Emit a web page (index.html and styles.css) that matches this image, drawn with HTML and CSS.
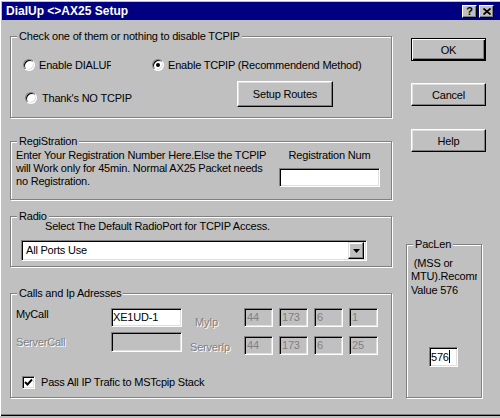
FILE: index.html
```html
<!DOCTYPE html>
<html>
<head>
<meta charset="utf-8">
<title>DialUp AX25 Setup</title>
<link rel="stylesheet" href="styles.css">
</head>
<body>
<div class="window">
  <div class="titlebar">
    <span class="title">DialUp &lt;&gt;AX25 Setup</span>
    <div class="caps">
      <span class="cap cap-help">?</span>
      <span class="cap cap-close"><svg width="8" height="7" viewBox="0 0 8 7"><path d="M0.5 0.5 L7.5 6.5 M7.5 0.5 L0.5 6.5" stroke="#000" stroke-width="1.7" fill="none"/></svg></span>
    </div>
  </div>
  <div class="client">
    <div class="leftcol">
      <div class="group g1">
        <div class="legend">Check one of them or nothing to disable TCPIP</div>
        <div class="g1-row1">
          <div class="opt opt-dialup"><span class="radio"></span><span class="opt-text clip-dialup">Enable DIALUP</span></div>
          <div class="opt"><span class="radio on"></span><span class="opt-text">Enable TCPIP (Recommendend Method)</span></div>
        </div>
        <div class="g1-row2">
          <div class="opt opt-no"><span class="radio"></span><span class="opt-text">Thank's NO TCPIP</span></div>
          <div class="btn btn-routes">Setup Routes</div>
        </div>
      </div>

      <div class="group g2">
        <div class="legend">RegiStration</div>
        <div class="g2-body">
          <div class="reg-text">Enter Your Registration Number Here.Else the TCPIP<br>will Work only for 45min. Normal AX25 Packet needs<br>no Registration.</div>
          <div class="reg-side">
            <div class="reg-label">Registration Num</div>
            <div class="edit reg-input"></div>
          </div>
        </div>
      </div>

      <div class="group g3">
        <div class="legend">Radio</div>
        <div class="radio-text">Select The Default RadioPort for TCPIP Access.</div>
        <div class="edit combo">
          <span class="combo-text">All Ports Use</span>
          <span class="combo-btn"><svg width="7" height="4" viewBox="0 0 7 4"><path d="M0 0 H7 L3.5 4 Z" fill="#000"/></svg></span>
        </div>
      </div>

      <div class="group g4">
        <div class="legend">Calls and Ip Adresses</div>
        <div class="calls">
          <div class="calls-left">
            <div class="lbl lbl-mycall">MyCall</div>
            <div class="edit call-input">XE1UD-1</div>
            <div class="lbl dis lbl-server">ServerCall</div>
            <div class="edit disabled call-input2"></div>
          </div>
          <div class="calls-right">
            <div class="lbl dis lbl-myip">MyIp</div>
            <div class="edit disabled ip">44</div>
            <div class="edit disabled ip">173</div>
            <div class="edit disabled ip">6</div>
            <div class="edit disabled ip">1</div>
            <div class="lbl dis lbl-serverip">ServerIp</div>
            <div class="edit disabled ip">44</div>
            <div class="edit disabled ip">173</div>
            <div class="edit disabled ip">6</div>
            <div class="edit disabled ip">25</div>
          </div>
        </div>
        <div class="check-row">
          <span class="checkbox"><svg width="9" height="9" viewBox="0 0 9 9"><path d="M1 4 L3.5 6.5 L8 1.5" stroke="#000" stroke-width="1.9" fill="none"/></svg></span>
          <span class="check-text">Pass All IP Trafic to MSTcpip Stack</span>
        </div>
      </div>
    </div>

    <div class="rightcol">
      <div class="btn default btn-ok">OK</div>
      <div class="btn btn-cancel">Cancel</div>
      <div class="btn btn-help">Help</div>
      <div class="group g5">
        <div class="legend">PacLen</div>
        <div class="pac-text"> (MSS or<br>MTU).Recommended<br>Value 576</div>
        <div class="edit pac-input">576<span class="caret"></span></div>
      </div>
    </div>
  </div>
</div>
</body>
</html>
```

FILE: styles.css
```css
html, body {
  margin: 0;
  padding: 0;
}
body {
  width: 500px;
  height: 418px;
  overflow: hidden;
  background: #c0c0c0;
  font-family: "Liberation Sans", Arial, sans-serif;
  font-size: 11px;
  letter-spacing: -0.2px;
  color: #000;
}
.window {
  box-sizing: border-box;
  width: 500px;
  height: 416px;
  padding: 2px 0 0 2px;
  background: #c0c0c0;
  box-shadow: inset 1px 1px 0 #fff, inset 0 -1px 0 #000, inset 0 -2px 0 #808080;
}
.titlebar {
  height: 18px;
  background: #000080;
  display: flex;
  align-items: center;
  padding-left: 4px;
}
.title {
  color: #fff;
  font-weight: bold;
  font-size: 12px;
  letter-spacing: 0;
  line-height: 18px;
}
.caps {
  margin-left: auto;
  margin-right: 6px;
  display: flex;
  gap: 2px;
}
.cap {
  box-sizing: border-box;
  width: 15px;
  height: 13px;
  background: #c0c0c0;
  border: 1px solid;
  border-color: #fff #000 #000 #fff;
  box-shadow: inset -1px -1px 0 #808080;
  display: flex;
  align-items: center;
  justify-content: center;
  font-weight: bold;
  font-size: 11px;
  line-height: 11px;
  letter-spacing: 0;
}

.client {
  display: flex;
  padding-left: 8px;
}
.leftcol {
  width: 382px;
  display: flex;
  flex-direction: column;
}
.rightcol {
  width: 80px;
  margin-left: 14px;
  display: flex;
  flex-direction: column;
}

.group {
  box-sizing: border-box;
  border: 1px solid #808080;
  box-shadow: 1px 1px 0 #fff, inset 1px 1px 0 #fff;
  display: flex;
  flex-direction: column;
}
.legend {
  align-self: flex-start;
  background: #c0c0c0;
  margin-top: -7px;
  margin-left: 6px;
  padding: 0 2px;
  line-height: 13px;
  white-space: nowrap;
}

.g1 { margin-top: 16px; padding-bottom: 10px; }
.g1-row1 {
  display: flex;
  margin-top: 16px;
  margin-left: 12px;
  height: 12px;
}
.opt {
  display: flex;
  align-items: center;
  gap: 4px;
  white-space: nowrap;
  line-height: 12px;
}
.opt-dialup { width: 129px; }
.clip-dialup { width: 72px; overflow: hidden; }
.g1-row2 {
  display: flex;
  margin-top: 10px;
  margin-left: 14px;
  height: 26px;
}
.opt-no {
  width: 212px;
  align-self: flex-start;
  margin-top: 11px;
  gap: 5px;
}
.radio {
  box-sizing: border-box;
  flex: none;
  width: 12px;
  height: 12px;
  border-radius: 50%;
  background: #fff;
  border: 1px solid;
  border-color: #808080 #fff #fff #808080;
  box-shadow: inset 1px 1px 0 #000, inset -1px -1px 0 #dfdfdf;
  display: flex;
  align-items: center;
  justify-content: center;
}
.radio.on::after {
  content: "";
  width: 4px;
  height: 4px;
  border-radius: 50%;
  background: #000;
}

.btn {
  box-sizing: border-box;
  background: #c0c0c0;
  border: 1px solid;
  border-color: #fff #000 #000 #fff;
  box-shadow: inset -1px -1px 0 #808080, inset 1px 1px 0 #dfdfdf;
  display: flex;
  align-items: center;
  justify-content: center;
  white-space: nowrap;
}
.btn.default {
  border-color: #000;
  box-shadow: inset 1px 1px 0 #fff, inset -1px -1px 0 #000, inset -2px -2px 0 #808080;
}
.btn-routes {
  width: 96px;
  height: 26px;
}
.btn-ok, .btn-cancel, .btn-help {
  width: 75px;
  height: 23px;
  margin-left: 5px;
}
.btn-ok { margin-top: 18px; }
.btn-cancel { margin-top: 22px; }
.btn-help { margin-top: 23px; }

.edit {
  box-sizing: border-box;
  background: #fff;
  border: 1px solid;
  border-color: #808080 #fff #fff #808080;
  box-shadow: inset 1px 1px 0 #000, inset -1px -1px 0 #dfdfdf;
  white-space: nowrap;
  overflow: hidden;
}
.edit.disabled {
  background: #c0c0c0;
  color: #808080;
}

.g2 { margin-top: 23px; padding-bottom: 11px; }
.g2-body {
  display: flex;
  margin-top: 1px;
}
.reg-text {
  margin-left: 5px;
  line-height: 13px;
  white-space: nowrap;
}
.reg-side {
  margin-left: auto;
  margin-right: 11px;
  width: 101px;
  display: flex;
  flex-direction: column;
}
.reg-label {
  text-align: center;
  line-height: 13px;
  white-space: nowrap;
}
.reg-input {
  margin-top: 6px;
  height: 19px;
}

.g3 { margin-top: 16px; padding-bottom: 5px; }
.radio-text {
  margin-top: -3px;
  margin-left: 34px;
  line-height: 13px;
}
.combo {
  margin-top: 7px;
  margin-left: 10px;
  width: 346px;
  height: 21px;
  display: flex;
  align-items: center;
  padding: 2px;
}
.combo-text {
  padding-left: 2px;
  line-height: 13px;
}
.combo-btn {
  box-sizing: border-box;
  margin-left: auto;
  width: 16px;
  height: 17px;
  background: #c0c0c0;
  border: 1px solid;
  border-color: #dfdfdf #000 #000 #dfdfdf;
  box-shadow: inset -1px -1px 0 #808080, inset 1px 1px 0 #fff;
  display: flex;
  align-items: center;
  justify-content: center;
}

.g4 { margin-top: 26px; padding-bottom: 8px; }
.calls {
  display: flex;
  margin-top: 8px;
}
.calls-left {
  margin-left: 5px;
  display: grid;
  grid-template-columns: 95px 71px;
  grid-template-rows: 19px 20px;
  row-gap: 5px;
  align-self: flex-start;
}
.calls-right {
  display: grid;
  grid-template-columns: 56px 29px 29px 29px 29px;
  grid-template-rows: 19px 19px;
  column-gap: 6px;
  row-gap: 9px;
}
.lbl {
  line-height: 13px;
  white-space: nowrap;
  align-self: start;
}
.lbl.dis {
  color: #808080;
  text-shadow: 1px 1px 0 #fff;
}
.lbl-server { margin-top: 4px; }
.lbl-myip { margin-top: 8px; margin-left: 13px; }
.lbl-serverip { margin-top: 5px; margin-left: 8px; }
.call-input, .call-input2, .ip, .pac-input {
  line-height: 17px;
  padding-left: 1px;
}
.ip { padding-left: 2px; }

.check-row {
  display: flex;
  align-items: center;
  margin-top: 21px;
  margin-left: 11px;
  height: 13px;
  gap: 6px;
}
.checkbox {
  box-sizing: border-box;
  width: 13px;
  height: 13px;
  background: #fff;
  border: 1px solid;
  border-color: #808080 #fff #fff #808080;
  box-shadow: inset 1px 1px 0 #000, inset -1px -1px 0 #dfdfdf;
  display: flex;
  align-items: center;
  justify-content: center;
}
.check-text {
  line-height: 13px;
  white-space: nowrap;
}

.g5 {
  margin-top: 92px;
  width: 76px;
  padding-bottom: 30px;
}
.pac-text {
  margin-top: 5.5px;
  margin-left: 4px;
  width: 66px;
  overflow: hidden;
  white-space: pre;
  line-height: 13.5px;
}
.pac-input {
  margin-top: 50px;
  margin-left: 22px;
  width: 29px;
  height: 20px;
  line-height: 18px;
}
.caret {
  display: inline-block;
  width: 1px;
  height: 13px;
  background: #000;
  vertical-align: -2px;
}
```
